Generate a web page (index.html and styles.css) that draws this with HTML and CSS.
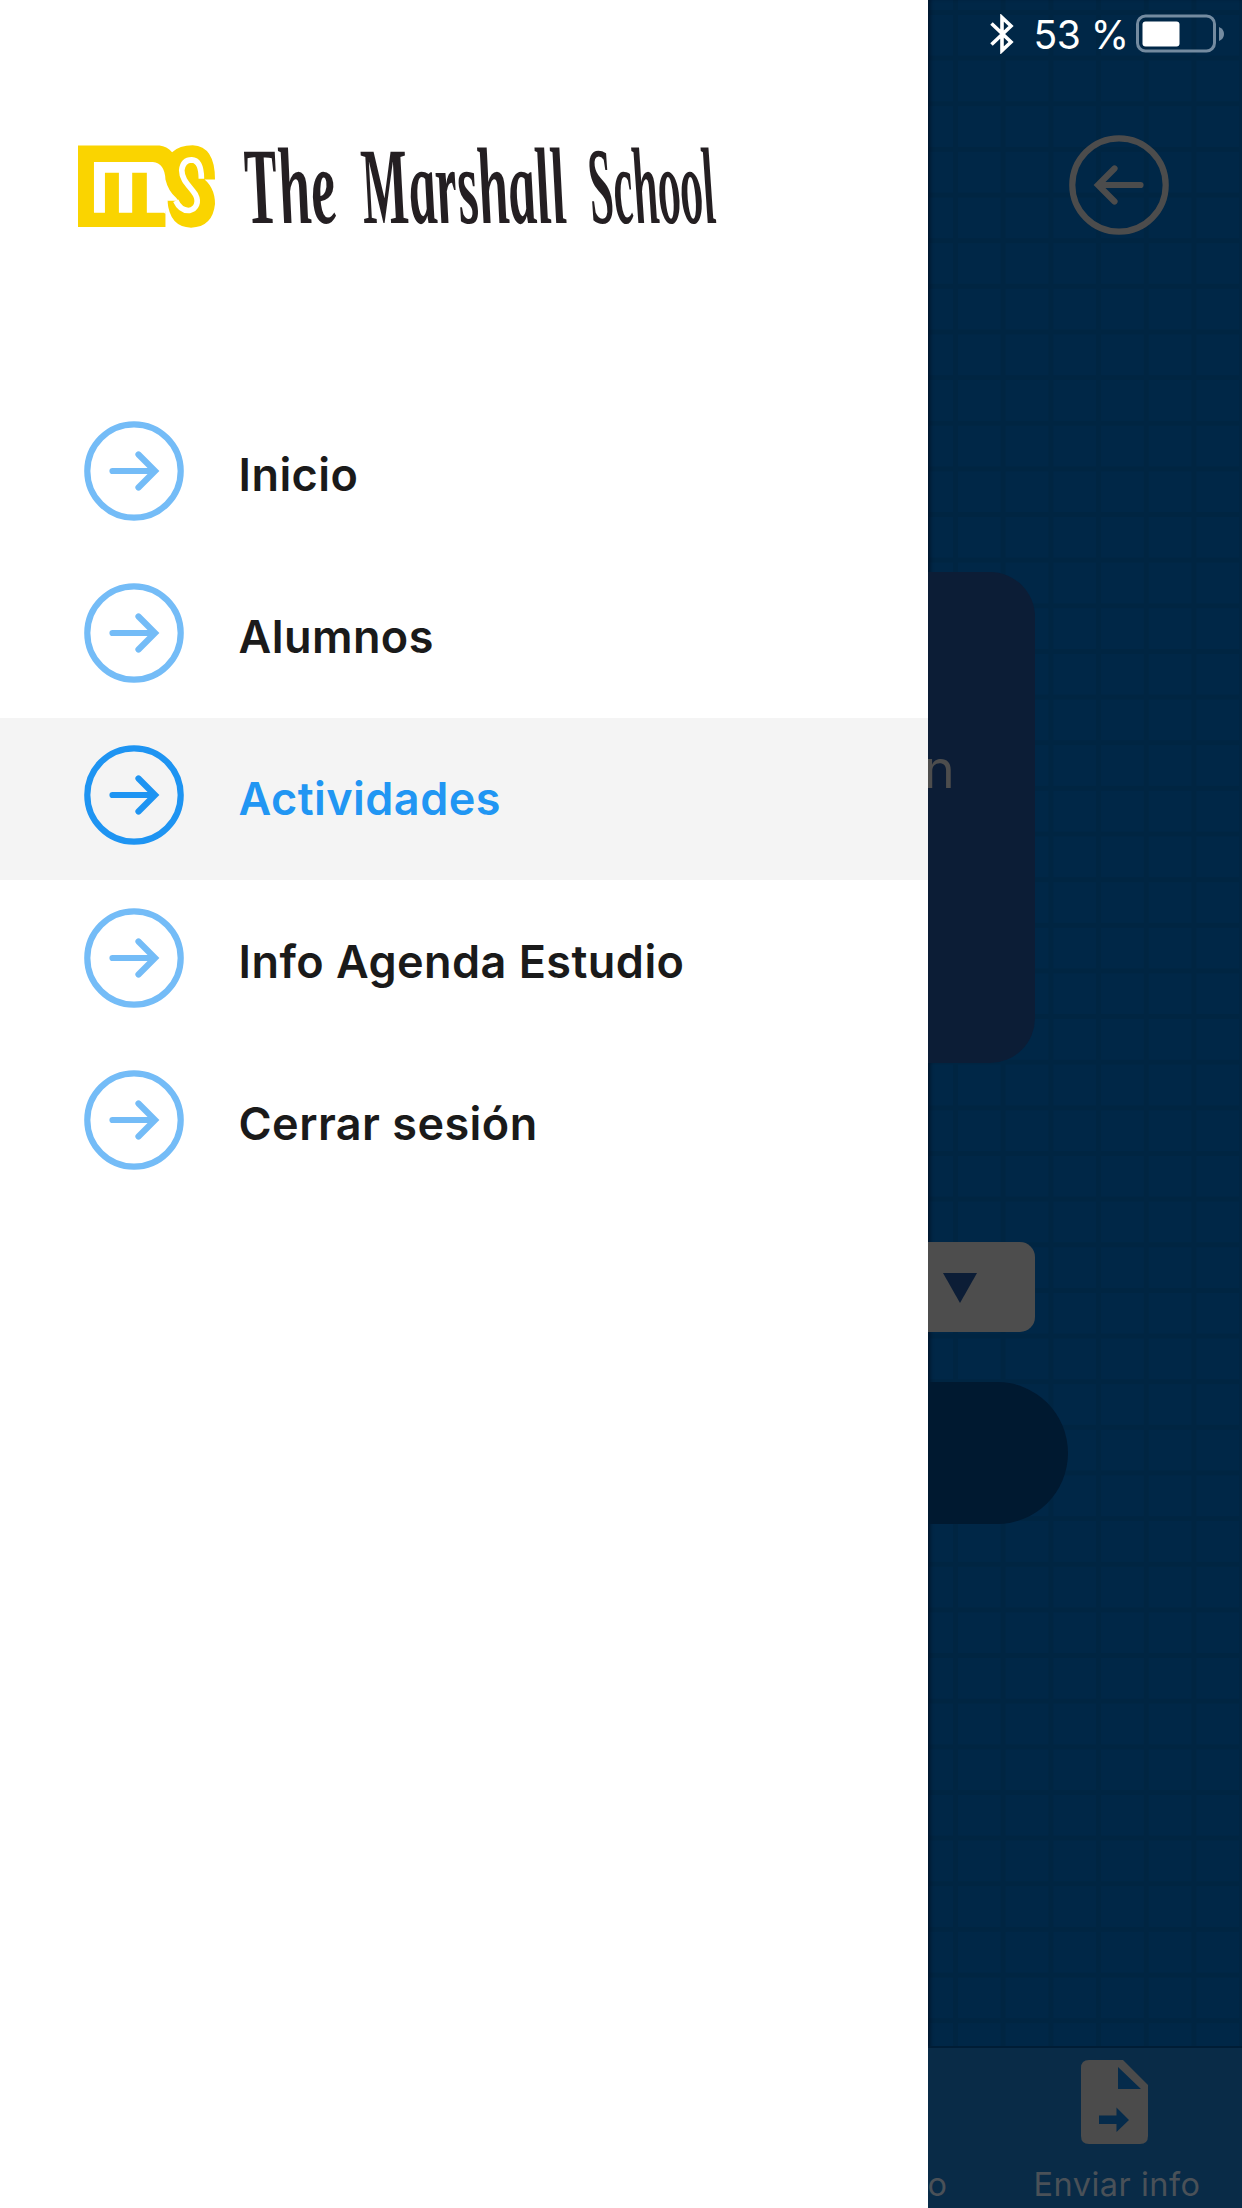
FILE: index.html
```html
<!DOCTYPE html>
<html lang="es">
<head>
  <meta charset="UTF-8">
  <meta name="viewport" content="width=device-width, initial-scale=1.0">
  <title>The Marshall School</title>
  <link rel="stylesheet" href="styles.css">
</head>
<body>
  <!-- shared icons -->
  <svg class="defs" width="0" height="0">
    <symbol id="arrow-circle" viewBox="0 0 100 100">
      <circle cx="50" cy="50" r="46.7" />
      <path d="M28.5 50H70M54.5 33.5L71 50L54.5 66.5" />
    </symbol>
  </svg>

  <div class="screen">
    <aside class="drawer">
      <header class="brand">
        <svg class="brand-mark" viewBox="55 77 412 248">
          <path fill="#fad400" d="M55 78H300Q322 80 338 98Q360 77 400 77Q467 80 467 180H432L425 172Q467 200 467 254Q460 323 395 325Q330 323 324 244H318V323H55Z" />
          <path fill="#fff" d="M103 127H280Q316 130 318 180Q326 214 350 235L357 244H324L318 284L314 280H262V160H218V280H178V160H136V280H103Z" />
          <path fill="none" stroke="#fff" stroke-width="17" d="M349 244C360 268 375 274 390 273C411 268 420 248 408 225C394 202 367 184 367 152C370 126 384 121 397 121C417 122 426 142 426 178" />
        </svg>
        <svg class="brand-name" viewBox="0 0 480 90">
          <text transform="translate(2 78) skewX(8)" textLength="92" lengthAdjust="spacingAndGlyphs">The</text>
          <text transform="translate(119 78) skewX(8)" textLength="205" lengthAdjust="spacingAndGlyphs">Marshall</text>
          <text transform="translate(347 78) skewX(8)" textLength="126" lengthAdjust="spacingAndGlyphs">School</text>
        </svg>
      </header>

      <nav class="menu">
        <a class="menu-item"><svg class="icon"><use href="#arrow-circle" /></svg><span>Inicio</span></a>
        <a class="menu-item"><svg class="icon"><use href="#arrow-circle" /></svg><span>Alumnos</span></a>
        <a class="menu-item active"><svg class="icon"><use href="#arrow-circle" /></svg><span>Actividades</span></a>
        <a class="menu-item"><svg class="icon"><use href="#arrow-circle" /></svg><span>Info Agenda Estudio</span></a>
        <a class="menu-item"><svg class="icon"><use href="#arrow-circle" /></svg><span>Cerrar sesión</span></a>
      </nav>
    </aside>

    <main class="app">
      <div class="status-bar">
        <svg class="bluetooth" viewBox="0 0 24 40">
          <path d="M1.5 9.5L21 28L12 36.5V3.5L21 12L1.5 30.5" />
        </svg>
        <span class="percent">53 %</span>
        <svg class="battery" viewBox="0 0 90 40">
          <rect x="1.5" y="2" width="77" height="35" rx="8" fill="none" stroke="#748ba0" stroke-width="3" />
          <rect x="6.5" y="7.5" width="37" height="25" rx="3" fill="#fff" />
          <path d="M83 13Q88 15 88 20Q88 25 83 27Z" fill="#748ba0" />
        </svg>
      </div>
      <svg class="icon back"><use href="#arrow-circle" /></svg>
      <section class="card">n</section>
      <div class="select">
        <svg viewBox="0 0 34 30"><path d="M0 0H34L17 30Z" /></svg>
      </div>
      <div class="pill"></div>

      <footer class="tab-bar">
        <div class="tab cut">o</div>
        <div class="tab">
          <svg class="file-icon" viewBox="0 0 67 84">
            <path fill="#4b4b4b" d="M8 0H42L67 25V76Q67 84 59 84H8Q0 84 0 76V8Q0 0 8 0Z" />
            <path fill="#052b4b" d="M37 7V29H60ZM18 55.5H35.5V47.5L48 60L35.5 72V64H18Z" />
          </svg>
          <span>Enviar info</span>
        </div>
      </footer>
    </main>
  </div>
</body>
</html>
```
FILE: styles.css
```css
* {
  box-sizing: border-box;
}
body {
  margin: 0;
  font-family: Inter, Roboto, sans-serif;
  background: #fff;
  overflow: hidden;
}
.defs {
  display: block;
}
.screen {
  display: flex;
  width: 1242px;
  height: 2208px;
}
.drawer {
  width: 927.5px;
  flex-shrink: 0;
  background: #fff;
}
.brand {
  display: flex;
  height: 393.5px;
  padding: 145px 0 0 78px;
}
.brand-mark {
  width: 137px;
  height: 83px;
}
.brand-name {
  width: 480px;
  height: 90px;
  margin-left: 31px;
  overflow: visible;
}
.brand-name text {
  font-family: "Liberation Serif", serif;
  font-style: italic;
  font-weight: bold;
  font-size: 109px;
  fill: #241f22;
}
.menu-item {
  display: flex;
  align-items: center;
  height: 162.2px;
  padding-left: 84px;
  color: #1a1a1a;
  font-size: 45px;
  font-weight: 600;
  letter-spacing: 0.45px;
}
.menu-item .icon {
  color: #74bcf7;
  margin-bottom: 7px;
}
.menu-item span {
  margin-left: 54.5px;
}
.menu-item.active {
  background: #f4f4f4;
  color: #2196f3;
}
.menu-item.active .icon {
  color: #1e94f2;
}
.icon {
  display: block;
  width: 100px;
  height: 100px;
  fill: none;
  stroke: currentColor;
  stroke-width: 6.2;
  stroke-linecap: round;
  flex-shrink: 0;
}
.app {
  display: flex;
  flex-direction: column;
  flex: 1;
  overflow: hidden;
  background-color: #002747;
  background-image:
    linear-gradient(90deg, #002542 5px, transparent 5px),
    linear-gradient(#002542 5px, transparent 5px);
  background-size: 47.7px 100%, 100% 45.65px;
  background-position: 25px 0, 0 10px;
  box-shadow: inset 4px 0 4px -2px #00142a;
}
.status-bar {
  display: flex;
  height: 60px;
  padding: 14px 0 0 62px;
  color: #fff;
}
.bluetooth {
  width: 24px;
  height: 40px;
  fill: none;
  stroke: #fff;
  stroke-width: 3.6;
}
.percent {
  width: 102px;
  margin-left: 20px;
  font-size: 39px;
  line-height: 42px;
  letter-spacing: -0.5px;
  white-space: nowrap;
}
.battery {
  width: 90px;
  height: 40px;
}
.back {
  color: #4c4c4c;
  margin: 75px 0 0 141.5px;
  transform: scaleX(-1);
}
.card {
  width: 107px;
  height: 491px;
  margin-top: 337px;
  padding-top: 165px;
  border-radius: 0 45px 45px 0;
  background: #0c1d36;
  color: #4d4d4d;
  font-size: 53px;
  line-height: 64px;
  text-indent: -4px;
}
.select {
  width: 107px;
  height: 90px;
  margin-top: 179px;
  padding: 31px 0 0 15px;
  border-radius: 0 15px 15px 0;
  background: #4d4d4d;
}
.select svg {
  display: block;
  width: 34px;
  height: 30px;
  fill: #0c1d36;
}
.pill {
  width: 140px;
  height: 142px;
  margin-top: 50px;
  border-radius: 0 71px 71px 0;
  background: #001930;
}
.tab-bar {
  display: flex;
  height: 162px;
  margin-top: auto;
  border-top: 2px solid #001d36;
  background: #092b47;
  color: #4a5158;
  font-size: 32.5px;
  line-height: 40px;
}
.tab {
  width: 248px;
  display: flex;
  flex-direction: column;
  align-items: center;
  padding-top: 12px;
  flex-shrink: 0;
}
.tab span {
  margin-top: 21px;
  padding-left: 5px;
  letter-spacing: 0.5px;
  white-space: nowrap;
}
.tab.cut {
  width: 63px;
  align-items: flex-start;
  padding-top: 117px;
}
.file-icon {
  width: 67px;
  height: 84px;
}
```
